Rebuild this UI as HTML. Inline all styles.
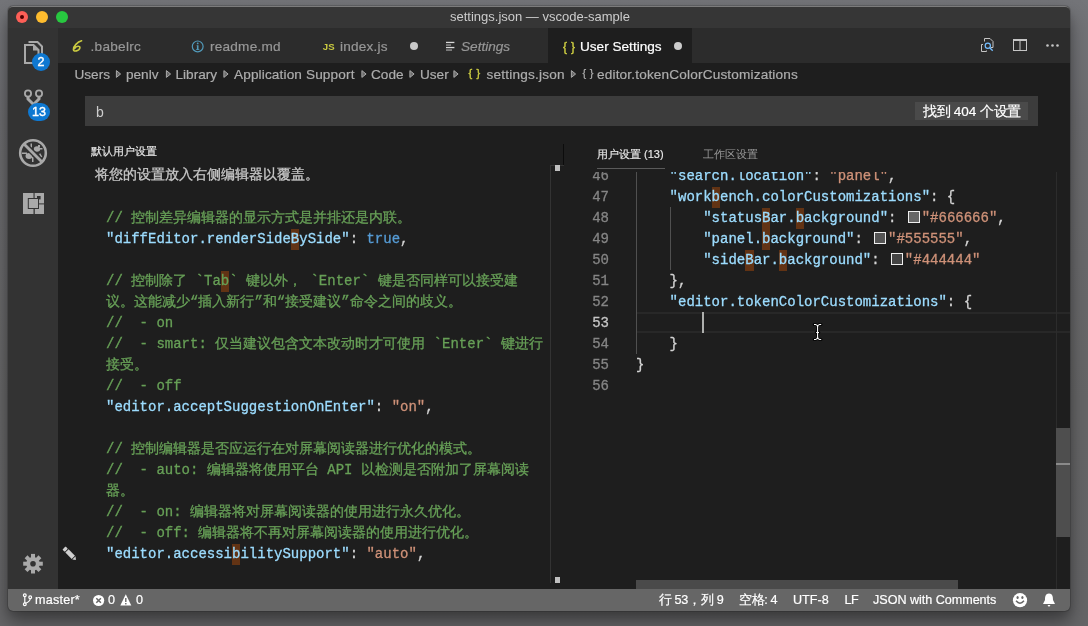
<!DOCTYPE html>
<html><head><meta charset="utf-8"><style>
*{margin:0;padding:0;box-sizing:border-box}
html,body{width:1088px;height:626px;overflow:hidden}
body{background:linear-gradient(180deg,#747579 0px,#6c6c6f 120px,#666667 400px,#656567 626px);font-family:"Liberation Sans",sans-serif;position:relative}
.a{position:absolute;white-space:pre}
.b{position:absolute}
i{display:inline-block;width:1em;font-style:normal;overflow:visible}
.m{position:absolute;white-space:pre;font-family:"Liberation Mono",monospace;font-size:14px;line-height:21px;-webkit-text-stroke:0.3px currentColor}
.m span{-webkit-text-stroke:0.3px currentColor}
</style></head>
<body><div style="position:absolute;left:0;top:0;width:1088px;height:626px;will-change:transform">
<div class="b" style="left:8px;top:6px;width:1062px;height:605px;background:#1e1e1e;border-radius:5px;box-shadow:0 10px 22px rgba(0,0,0,.30), 0 12px 14px rgba(0,0,0,.12), 0 4px 10px rgba(0,0,0,.12), 0 0 0 1px rgba(0,0,0,.15)"></div>
<div class="b" style="left:8px;top:6px;width:1062px;height:22px;background:#363636;border-radius:5px 5px 0 0;border-top:1px solid #7c7c7c"></div>
<div class="b" style="left:16px;top:11px;width:12px;height:12px;background:#fd5f57;border-radius:50%"></div>
<div class="b" style="left:36px;top:11px;width:12px;height:12px;background:#febc2e;border-radius:50%"></div>
<div class="b" style="left:56px;top:11px;width:12px;height:12px;background:#28c840;border-radius:50%"></div>
<div class="b" style="left:20px;top:15px;width:4px;height:4px;background:#4d0000;border-radius:50%"></div>
<div class="a" style="left:450px;top:9px;font-size:13px;color:#cccccc;line-height:15px">settings.json — vscode-sample</div>
<div class="b" style="left:8px;top:28px;width:50px;height:561px;background:#333333"></div>
<svg class="b" style="left:0;top:0" width="70" height="626" viewBox="0 0 70 626">
<g fill="none" stroke="#a9a9a9" stroke-width="2">
 <path d="M25 45 H33.5 L38.5 50 V63 H25 Z" />
 <path d="M28.5 42 H37.5 L42 46.5 V55" />
</g>
<path d="M33 45 L38.5 50.5 H33 Z" fill="#a9a9a9"/>
<circle cx="41" cy="62" r="9" fill="#0e78d1"/>
<text x="41" y="66.3" font-family="Liberation Sans" font-size="12.5" fill="#fff" stroke="#fff" stroke-width="0.4" text-anchor="middle">2</text>
<g fill="none" stroke="#a9a9a9" stroke-width="1.8">
 <circle cx="28" cy="93.5" r="3.1"/>
 <circle cx="39" cy="93.5" r="3.1"/>
</g>
<path d="M28 96.5 V99 L33.5 104.5 L39 99 V96.5" fill="none" stroke="#a9a9a9" stroke-width="3"/>
<rect x="28" y="103" width="22" height="18" rx="9" fill="#0e78d1"/>
<text x="39" y="115.8" font-family="Liberation Sans" font-size="12.5" fill="#fff" stroke="#fff" stroke-width="0.4" text-anchor="middle">13</text>
<circle cx="33" cy="153" r="12.8" fill="none" stroke="#a9a9a9" stroke-width="2.6"/>
<g fill="#a9a9a9">
 <ellipse cx="29" cy="156" rx="3.5" ry="3"/>
 <ellipse cx="37" cy="149" rx="3.2" ry="2.8"/>
 <rect x="22" y="152.5" width="5" height="1.5"/>
 <rect x="30.5" y="143.5" width="1.5" height="4"/>
 <rect x="39" y="154" width="1.5" height="4" transform="rotate(-30 39 154)"/>
 <rect x="32" y="157" width="1.5" height="5"/>
 <rect x="38" y="145" width="2" height="2"/>
 <rect x="40" y="148" width="2.5" height="1.5"/>
</g>
<line x1="25.5" y1="145.5" x2="40.5" y2="160.5" stroke="#333333" stroke-width="5.5"/>
<line x1="24.5" y1="144.5" x2="41.5" y2="161.5" stroke="#a9a9a9" stroke-width="2.8"/>
<g fill="#a9a9a9">
 <rect x="23" y="193" width="10.5" height="21"/>
 <rect x="34.6" y="193" width="9.4" height="10.4"/>
 <rect x="34.8" y="204.4" width="9.2" height="9.6"/>
</g>
<g fill="#333333">
 <rect x="27.8" y="198" width="11.2" height="11"/>
 <rect x="37" y="196" width="3.6" height="3.4"/>
</g>
<rect x="28.8" y="199" width="9.2" height="9" fill="#a9a9a9"/>
<g transform="translate(33 563.7)" fill="#a9a9a9">
 <circle r="6.8"/>
 <rect x="-2" y="-9.8" width="4" height="5" transform="rotate(0)" /><rect x="-2" y="-9.8" width="4" height="5" transform="rotate(45)" /><rect x="-2" y="-9.8" width="4" height="5" transform="rotate(90)" /><rect x="-2" y="-9.8" width="4" height="5" transform="rotate(135)" /><rect x="-2" y="-9.8" width="4" height="5" transform="rotate(180)" /><rect x="-2" y="-9.8" width="4" height="5" transform="rotate(225)" /><rect x="-2" y="-9.8" width="4" height="5" transform="rotate(270)" /><rect x="-2" y="-9.8" width="4" height="5" transform="rotate(315)" />
</g>
<circle cx="33" cy="563.7" r="2.8" fill="#333333"/>
</svg>
<div class="b" style="left:58px;top:28px;width:1012px;height:35px;background:#2c2c2c"></div>
<div class="b" style="left:58px;top:28px;width:490px;height:35px;background:#2c2c2c"></div>
<div class="b" style="left:548px;top:28px;width:144px;height:35px;background:#1e1e1e"></div>
<div class="a" style="left:90.5px;top:39px;font-size:13.6px;line-height:16px;-webkit-text-stroke:0.2px currentColor;color:#979797;letter-spacing:0.28px">.babelrc</div>
<div class="a" style="left:210px;top:39px;font-size:13.6px;line-height:16px;-webkit-text-stroke:0.2px currentColor;color:#979797;letter-spacing:0.22px">readme.md</div>
<div class="a" style="left:340px;top:39px;font-size:13.6px;line-height:16px;-webkit-text-stroke:0.2px currentColor;color:#979797;letter-spacing:0.2px">index.js</div>
<div class="a" style="left:461px;top:39px;font-size:13.6px;line-height:16px;-webkit-text-stroke:0.2px currentColor;color:#979797;font-style:italic">Settings</div>
<div class="a" style="left:580px;top:39px;font-size:13.6px;line-height:16px;-webkit-text-stroke:0.2px currentColor;color:#ffffff">User Settings</div>
<svg class="b" style="left:66px;top:34px" width="24" height="24" viewBox="66 34 24 24"><path d="M81.6 40.8 C77.5 41.8 73.2 46.5 73.4 49.6 C73.6 52.4 79.3 50.8 79.9 47.8 C80.3 45.6 76.2 45.8 74.6 48.6" fill="none" stroke="#cbcb41" stroke-width="1.6" stroke-linecap="round"/></svg>
<svg class="b" style="left:186px;top:36px" width="24" height="20" viewBox="186 36 24 20"><circle cx="197.7" cy="46.4" r="5.4" fill="none" stroke="#519aba" stroke-width="1.2"/><circle cx="197.7" cy="43.4" r="0.9" fill="#519aba"/><path d="M196.6 45.3 H198.5 V49.2 H199.3 V50 H196.1 V49.2 H196.9 V46.1 H196.6 Z" fill="#519aba"/></svg>
<div class="a" style="left:322.8px;top:41px;font-size:9.6px;line-height:12px;color:#cbcb41;font-weight:bold">JS</div>
<div class="b" style="left:410px;top:42px;width:8px;height:8px;background:#c8c8c8;border-radius:50%"></div>
<div class="b" style="left:674px;top:42px;width:8px;height:8px;background:#cccccc;border-radius:50%"></div>
<div class="a" style="left:563px;top:38.5px;font-size:12px;line-height:16px;color:#cbcb41;-webkit-text-stroke:0.4px #cbcb41;letter-spacing:0.3px">{ }</div>
<div class="b" style="left:58px;top:63px;width:1012px;height:526px;background:#1e1e1e"></div>
<div class="a" style="left:74.5px;top:67px;font-size:13.6px;line-height:16px;color:#adadad;-webkit-text-stroke:0.2px #adadad;">Users</div>
<div class="a" style="left:126px;top:67px;font-size:13.6px;line-height:16px;color:#adadad;-webkit-text-stroke:0.2px #adadad;">penlv</div>
<div class="a" style="left:175.5px;top:67px;font-size:13.6px;line-height:16px;color:#adadad;-webkit-text-stroke:0.2px #adadad;">Library</div>
<div class="a" style="left:234px;top:67px;font-size:13.6px;line-height:16px;color:#adadad;-webkit-text-stroke:0.2px #adadad;"><span style="letter-spacing:0.14px">Application Support</span></div>
<div class="a" style="left:371px;top:67px;font-size:13.6px;line-height:16px;color:#adadad;-webkit-text-stroke:0.2px #adadad;">Code</div>
<div class="a" style="left:420px;top:67px;font-size:13.6px;line-height:16px;color:#adadad;-webkit-text-stroke:0.2px #adadad;">User</div>
<div class="a" style="left:486.5px;top:67px;font-size:13.6px;line-height:16px;color:#adadad;-webkit-text-stroke:0.2px #adadad;"><span style="letter-spacing:0.2px">settings.json</span></div>
<div class="a" style="left:597px;top:67px;font-size:13.6px;line-height:16px;color:#adadad;-webkit-text-stroke:0.2px #adadad;"><span style="letter-spacing:0.17px">editor.tokenColorCustomizations</span></div>
<svg class="b" style="left:0;top:60px" width="700" height="30" viewBox="0 60 700 30"><g fill="#6a6a6a" stroke="#a8a8a8" stroke-width="1" stroke-linejoin="round"><path d="M116.4 70.6 L120.6 74 L116.4 77.4 Z"/><path d="M166.4 70.6 L170.6 74 L166.4 77.4 Z"/><path d="M223.9 70.6 L228.1 74 L223.9 77.4 Z"/><path d="M361.9 70.6 L366.1 74 L361.9 77.4 Z"/><path d="M409.9 70.6 L414.1 74 L409.9 77.4 Z"/><path d="M453.9 70.6 L458.1 74 L453.9 77.4 Z"/><path d="M571.4 70.6 L575.6 74 L571.4 77.4 Z"/></g></svg>
<div class="a" style="left:468.5px;top:66px;font-size:11px;line-height:15px;color:#cbcb41;-webkit-text-stroke:0.4px #cbcb41;letter-spacing:0.6px">{ }</div>
<div class="a" style="left:582.5px;top:65.5px;font-size:11px;line-height:15px;color:#b0b0b0;-webkit-text-stroke:0.2px #b0b0b0;letter-spacing:0.3px">{ }</div>
<div class="b" style="left:85px;top:96px;width:953px;height:30px;background:#3c3c3c"></div>
<div class="a" style="left:96px;top:104px;font-size:14px;line-height:16px;color:#cccccc">b</div>
<div class="b" style="left:915px;top:102px;width:113px;height:18px;background:#4a4a4a"></div>
<div class="a" style="left:923px;top:104px;font-size:13.5px;line-height:16px;color:#ffffff;-webkit-text-stroke:0.2px #fff"><i>找</i><i>到</i> 404 <i>个</i><i>设</i><i>置</i></div>
<div class="m" style="left:95px;top:165px;color:#c8c8c8"><i>将</i><i>您</i><i>的</i><i>设</i><i>置</i><i>放</i><i>入</i><i>右</i><i>侧</i><i>编</i><i>辑</i><i>器</i><i>以</i><i>覆</i><i>盖</i><i>。</i></div>
<div class="m" style="left:106px;top:208px"><span style="color:#67a057">// <i>控</i><i>制</i><i>差</i><i>异</i><i>编</i><i>辑</i><i>器</i><i>的</i><i>显</i><i>示</i><i>方</i><i>式</i><i>是</i><i>并</i><i>排</i><i>还</i><i>是</i><i>内</i><i>联</i><i>。</i></span></div>
<div class="b" style="left:290.8px;top:229px;width:8.4px;height:21px;background:#623314"></div>
<div class="m" style="left:106px;top:229px"><span style="color:#9cdcfe">&quot;diffEditor.renderSideBySide&quot;</span><span style="color:#d4d4d4">: </span><span style="color:#569cd6">true</span><span style="color:#d4d4d4">,</span></div>
<div class="b" style="left:220.8px;top:271px;width:8.4px;height:21px;background:#623314"></div>
<div class="m" style="left:106px;top:271px"><span style="color:#67a057">// <i>控</i><i>制</i><i>除</i><i>了</i> `Tab` <i>键</i><i>以</i><i>外</i><i>，</i> `Enter` <i>键</i><i>是</i><i>否</i><i>同</i><i>样</i><i>可</i><i>以</i><i>接</i><i>受</i><i>建</i></span></div>
<div class="m" style="left:106px;top:292px"><span style="color:#67a057"><i>议</i><i>。</i><i>这</i><i>能</i><i>减</i><i>少</i>“<i>插</i><i>入</i><i>新</i><i>行</i>”<i>和</i>“<i>接</i><i>受</i><i>建</i><i>议</i>”<i>命</i><i>令</i><i>之</i><i>间</i><i>的</i><i>歧</i><i>义</i><i>。</i></span></div>
<div class="m" style="left:106px;top:313px"><span style="color:#67a057">//  - on</span></div>
<div class="m" style="left:106px;top:334px"><span style="color:#67a057">//  - smart: <i>仅</i><i>当</i><i>建</i><i>议</i><i>包</i><i>含</i><i>文</i><i>本</i><i>改</i><i>动</i><i>时</i><i>才</i><i>可</i><i>使</i><i>用</i> `Enter` <i>键</i><i>进</i><i>行</i></span></div>
<div class="m" style="left:106px;top:355px"><span style="color:#67a057"><i>接</i><i>受</i><i>。</i></span></div>
<div class="m" style="left:106px;top:376px"><span style="color:#67a057">//  - off</span></div>
<div class="m" style="left:106px;top:397px"><span style="color:#9cdcfe">&quot;editor.acceptSuggestionOnEnter&quot;</span><span style="color:#d4d4d4">: </span><span style="color:#ce9178">&quot;on&quot;</span><span style="color:#d4d4d4">,</span></div>
<div class="m" style="left:106px;top:439px"><span style="color:#67a057">// <i>控</i><i>制</i><i>编</i><i>辑</i><i>器</i><i>是</i><i>否</i><i>应</i><i>运</i><i>行</i><i>在</i><i>对</i><i>屏</i><i>幕</i><i>阅</i><i>读</i><i>器</i><i>进</i><i>行</i><i>优</i><i>化</i><i>的</i><i>模</i><i>式</i><i>。</i></span></div>
<div class="m" style="left:106px;top:460px"><span style="color:#67a057">//  - auto: <i>编</i><i>辑</i><i>器</i><i>将</i><i>使</i><i>用</i><i>平</i><i>台</i> API <i>以</i><i>检</i><i>测</i><i>是</i><i>否</i><i>附</i><i>加</i><i>了</i><i>屏</i><i>幕</i><i>阅</i><i>读</i></span></div>
<div class="m" style="left:106px;top:481px"><span style="color:#67a057"><i>器</i><i>。</i></span></div>
<div class="m" style="left:106px;top:502px"><span style="color:#67a057">//  - on: <i>编</i><i>辑</i><i>器</i><i>将</i><i>对</i><i>屏</i><i>幕</i><i>阅</i><i>读</i><i>器</i><i>的</i><i>使</i><i>用</i><i>进</i><i>行</i><i>永</i><i>久</i><i>优</i><i>化</i><i>。</i></span></div>
<div class="m" style="left:106px;top:523px"><span style="color:#67a057">//  - off: <i>编</i><i>辑</i><i>器</i><i>将</i><i>不</i><i>再</i><i>对</i><i>屏</i><i>幕</i><i>阅</i><i>读</i><i>器</i><i>的</i><i>使</i><i>用</i><i>进</i><i>行</i><i>优</i><i>化</i><i>。</i></span></div>
<div class="b" style="left:232.0px;top:544px;width:8.4px;height:21px;background:#623314"></div>
<div class="m" style="left:106px;top:544px"><span style="color:#9cdcfe">&quot;editor.accessibilitySupport&quot;</span><span style="color:#d4d4d4">: </span><span style="color:#ce9178">&quot;auto&quot;</span><span style="color:#d4d4d4">,</span></div>
<div class="b" style="left:564px;top:172px;width:506px;height:417px;overflow:hidden">
<div class="b" style="left:73px;top:140px;width:500px;height:21px;border-top:2px solid #282828;border-bottom:2px solid #282828"></div>
<div class="b" style="left:72px;top:0px;width:1px;height:182px;background:#505050"></div>
<div class="b" style="left:106px;top:35px;width:1px;height:63px;background:#505050"></div>
<div class="b" style="left:138px;top:140px;width:2px;height:21px;background:#aeafad"></div>
<div class="m" style="left:0px;top:-6px;width:45px;text-align:right;color:#858585">46</div>
<div class="m" style="left:72px;top:-6px"><span style="color:#d4d4d4">    </span><span style="color:#9cdcfe">&quot;search.location&quot;</span><span style="color:#d4d4d4">: </span><span style="color:#ce9178">&quot;panel&quot;</span><span style="color:#d4d4d4">,</span></div>
<div class="m" style="left:0px;top:15px;width:45px;text-align:right;color:#858585">47</div>
<div class="b" style="left:147.60px;top:15px;width:8.4px;height:21px;background:#623314"></div>
<div class="m" style="left:72px;top:15px"><span style="color:#d4d4d4">    </span><span style="color:#9cdcfe">&quot;workbench.colorCustomizations&quot;</span><span style="color:#d4d4d4">: {</span></div>
<div class="m" style="left:0px;top:36px;width:45px;text-align:right;color:#858585">48</div>
<div class="b" style="left:198.00px;top:36px;width:8.4px;height:21px;background:#623314"></div>
<div class="b" style="left:231.60px;top:36px;width:8.4px;height:21px;background:#623314"></div>
<div class="m" style="left:72px;top:36px"><span style="color:#d4d4d4">        </span><span style="color:#9cdcfe">&quot;statusBar.background&quot;</span><span style="color:#d4d4d4">: </span><span style="display:inline-block;box-sizing:border-box;width:12px;height:12px;border:1.4px solid #eeeeee;margin:0 2px 0 2.8px;vertical-align:-0.5px;background:#666666"></span><span style="color:#ce9178">&quot;#666666&quot;</span><span style="color:#d4d4d4">,</span></div>
<div class="m" style="left:0px;top:57px;width:45px;text-align:right;color:#858585">49</div>
<div class="b" style="left:198.00px;top:57px;width:8.4px;height:21px;background:#623314"></div>
<div class="m" style="left:72px;top:57px"><span style="color:#d4d4d4">        </span><span style="color:#9cdcfe">&quot;panel.background&quot;</span><span style="color:#d4d4d4">: </span><span style="display:inline-block;box-sizing:border-box;width:12px;height:12px;border:1.4px solid #eeeeee;margin:0 2px 0 2.8px;vertical-align:-0.5px;background:#555555"></span><span style="color:#ce9178">&quot;#555555&quot;</span><span style="color:#d4d4d4">,</span></div>
<div class="m" style="left:0px;top:78px;width:45px;text-align:right;color:#858585">50</div>
<div class="b" style="left:181.20px;top:78px;width:8.4px;height:21px;background:#623314"></div>
<div class="b" style="left:214.80px;top:78px;width:8.4px;height:21px;background:#623314"></div>
<div class="m" style="left:72px;top:78px"><span style="color:#d4d4d4">        </span><span style="color:#9cdcfe">&quot;sideBar.background&quot;</span><span style="color:#d4d4d4">: </span><span style="display:inline-block;box-sizing:border-box;width:12px;height:12px;border:1.4px solid #eeeeee;margin:0 2px 0 2.8px;vertical-align:-0.5px;background:#444444"></span><span style="color:#ce9178">&quot;#444444&quot;</span></div>
<div class="m" style="left:0px;top:99px;width:45px;text-align:right;color:#858585">51</div>
<div class="m" style="left:72px;top:99px"><span style="color:#d4d4d4">    },</span></div>
<div class="m" style="left:0px;top:120px;width:45px;text-align:right;color:#858585">52</div>
<div class="m" style="left:72px;top:120px"><span style="color:#d4d4d4">    </span><span style="color:#9cdcfe">&quot;editor.tokenColorCustomizations&quot;</span><span style="color:#d4d4d4">: {</span></div>
<div class="m" style="left:0px;top:141px;width:45px;text-align:right;color:#c6c6c6">53</div>
<div class="m" style="left:72px;top:141px"><span style="color:#d4d4d4"></span></div>
<div class="m" style="left:0px;top:162px;width:45px;text-align:right;color:#858585">54</div>
<div class="m" style="left:72px;top:162px"><span style="color:#d4d4d4">    }</span></div>
<div class="m" style="left:0px;top:183px;width:45px;text-align:right;color:#858585">55</div>
<div class="m" style="left:72px;top:183px"><span style="color:#d4d4d4">}</span></div>
<div class="m" style="left:0px;top:204px;width:45px;text-align:right;color:#858585">56</div>
<div class="m" style="left:72px;top:204px"><span style="color:#d4d4d4"></span></div>
</div>
<div class="a" style="left:91px;top:145px;font-size:11px;line-height:13px;color:#e8e8e8;-webkit-text-stroke:0.15px #e8e8e8"><i>默</i><i>认</i><i>用</i><i>户</i><i>设</i><i>置</i></div>
<div class="a" style="left:597px;top:148px;font-size:11px;line-height:13px;color:#e8e8e8;-webkit-text-stroke:0.15px #e8e8e8"><i>用</i><i>户</i><i>设</i><i>置</i> (13)</div>
<div class="a" style="left:703px;top:148px;font-size:11px;line-height:13px;color:#9a9a9a"><i>工</i><i>作</i><i>区</i><i>设</i><i>置</i></div>
<div class="b" style="left:597px;top:168px;width:68px;height:1px;background:#5a5a5a"></div>
<div class="b" style="left:563px;top:144px;width:1px;height:21px;background:#0c0c0c"></div>
<div class="b" style="left:550px;top:165px;width:14px;height:1px;background:#333333"></div>
<div class="b" style="left:550px;top:165px;width:1px;height:418px;background:#333333"></div>
<div class="b" style="left:555px;top:165px;width:5px;height:6px;background:#c0c0c0"></div>
<div class="b" style="left:555px;top:577px;width:5px;height:6px;background:#c0c0c0"></div>
<div class="b" style="left:1056px;top:172px;width:1px;height:417px;background:#2c2c2c"></div>
<div class="b" style="left:1056px;top:428px;width:14px;height:109px;background:#4e4e4e"></div>
<div class="b" style="left:1056px;top:463px;width:14px;height:2px;background:#8a8a8a"></div>
<div class="b" style="left:636px;top:580px;width:322px;height:9px;background:#4a4a4a"></div>
<div class="b" style="left:8px;top:589px;width:1062px;height:22px;background:#666666;border-radius:0 0 5px 5px"></div>
<div class="a" style="left:35px;top:593px;font-size:12.6px;line-height:15px;color:#ffffff;-webkit-text-stroke:0.2px #fff;letter-spacing:0.22px">master*</div>
<div class="a" style="left:108px;top:593px;font-size:12.6px;line-height:15px;color:#ffffff;-webkit-text-stroke:0.2px #fff;">0</div>
<div class="a" style="left:136px;top:593px;font-size:12.6px;line-height:15px;color:#ffffff;-webkit-text-stroke:0.2px #fff;">0</div>
<div class="a" style="left:658.5px;top:593px;font-size:12.6px;line-height:15px;color:#ffffff;-webkit-text-stroke:0.2px #fff;letter-spacing:-0.15px"><i>行</i> 53<i>，</i><i>列</i> 9</div>
<div class="a" style="left:739px;top:593px;font-size:12.6px;line-height:15px;color:#ffffff;-webkit-text-stroke:0.2px #fff;letter-spacing:-0.35px"><i>空</i><i>格</i>: 4</div>
<div class="a" style="left:793px;top:593px;font-size:12.6px;line-height:15px;color:#ffffff;-webkit-text-stroke:0.2px #fff;letter-spacing:0px">UTF-8</div>
<div class="a" style="left:844.5px;top:593px;font-size:12.6px;line-height:15px;color:#ffffff;-webkit-text-stroke:0.2px #fff;letter-spacing:-0.4px">LF</div>
<div class="a" style="left:873px;top:593px;font-size:12.6px;line-height:15px;color:#ffffff;-webkit-text-stroke:0.2px #fff;letter-spacing:-0.03px">JSON with Comments</div>
<svg class="b" style="left:0;top:585px" width="1088" height="30" viewBox="0 585 1088 30">
<g fill="none" stroke="#fff" stroke-width="1.2">
 <circle cx="24.8" cy="595.2" r="1.4"/><circle cx="24.8" cy="604.3" r="1.4"/><circle cx="30.2" cy="597.3" r="1.4"/>
 <path d="M24.8 596.6 V602.9 M30.2 598.7 Q30 601.5 25.6 603.2"/>
</g>
<circle cx="98.6" cy="600.5" r="5.6" fill="#fff"/>
<path d="M96.3 598.2 L100.9 602.8 M100.9 598.2 L96.3 602.8" stroke="#666" stroke-width="1.5"/>
<path d="M125.8 594.3 L131.3 605.5 H120.3 Z" fill="#fff"/>
<rect x="125.1" y="598" width="1.4" height="4" fill="#666"/><rect x="125.1" y="603" width="1.4" height="1.4" fill="#666"/>
<circle cx="1020" cy="600.2" r="7.1" fill="#fff"/>
<ellipse cx="1017.6" cy="597.6" rx="1.1" ry="1.5" fill="#666"/><ellipse cx="1022.4" cy="597.6" rx="1.1" ry="1.5" fill="#666"/>
<path d="M1016 600.8 Q1020 605.6 1024 600.8" fill="none" stroke="#666" stroke-width="1.4"/>
<path d="M1049 593.5 C1045.5 593.5 1045 596.5 1045 600 L1043 604 H1055 L1053 600 C1053 596.5 1052.5 593.5 1049 593.5 Z" fill="#fff"/>
<path d="M1047.5 605 H1050.5 L1049 607 Z" fill="#fff"/>
</svg>
<svg class="b" style="left:960px;top:30px" width="110" height="32" viewBox="960 30 110 32">
<g fill="none" stroke="#c5c5c5" stroke-width="1">
 <path d="M984.5 41.5 V38.5 H990 L993 41.5 V47.5 H991"/>
 <path d="M983 44.5 H981.5 V51.5 H986.5 V50.5"/>
</g>
<circle cx="987.8" cy="45.8" r="2.6" fill="none" stroke="#75beff" stroke-width="1.2"/>
<path d="M989.7 47.7 L992.7 50.7" stroke="#75beff" stroke-width="1.3"/>
<rect x="1013.5" y="39.5" width="13" height="11" fill="none" stroke="#c5c5c5" stroke-width="1"/>
<rect x="1013.5" y="39.5" width="13" height="1.5" fill="#c5c5c5"/>
<path d="M1020 40 V51" stroke="#c5c5c5" stroke-width="1"/>
<circle cx="1047.5" cy="45.5" r="1.3" fill="#c5c5c5"/><circle cx="1052.5" cy="45.5" r="1.3" fill="#c5c5c5"/><circle cx="1057.5" cy="45.5" r="1.3" fill="#c5c5c5"/>
<g fill="#8c8c8c">
</g>
</svg>
<svg class="b" style="left:440px;top:38px" width="20" height="16" viewBox="440 38 20 16">
<rect x="446" y="41.8" width="8.4" height="1.3" fill="#d8d8d8"/><rect x="446" y="44.4" width="5" height="1.3" fill="#9a9a9a"/><rect x="446" y="46.9" width="8.4" height="1.3" fill="#d8d8d8"/><rect x="446" y="49.4" width="6" height="1.3" fill="#9a9a9a"/>
</svg>
<svg class="b" style="left:55px;top:540px" width="30" height="25" viewBox="55 540 30 25">
<g transform="translate(69.8 553.8) rotate(45)" fill="#cfcfcf">
 <rect x="-8.2" y="-2.2" width="3.2" height="4.4" rx="0.6"/>
 <rect x="-4" y="-2.3" width="9" height="4.6"/>
 <path d="M5.9 -2.3 L8.6 0 L5.9 2.3 Z"/>
</g>
</svg>
<svg class="b" style="left:808px;top:320px" width="20" height="24" viewBox="808 320 20 24">
<path d="M814 324.5 H815.6 Q817.6 324.8 817.6 327 Q817.6 324.8 819.6 324.5 H821.2 M817.6 327 V337 Q817.6 339.2 815.6 339.5 H814 M817.6 337 Q817.6 339.2 819.6 339.5 H821.2 M816.2 332.5 H819" fill="none" stroke="#000" stroke-width="2.6" stroke-linecap="round"/>
<path d="M814 324.5 H815.6 Q817.6 324.8 817.6 327 Q817.6 324.8 819.6 324.5 H821.2 M817.6 327 V337 Q817.6 339.2 815.6 339.5 H814 M817.6 337 Q817.6 339.2 819.6 339.5 H821.2 M816.2 332.5 H819" fill="none" stroke="#fff" stroke-width="1.1"/>
</svg>
</div></body></html>
